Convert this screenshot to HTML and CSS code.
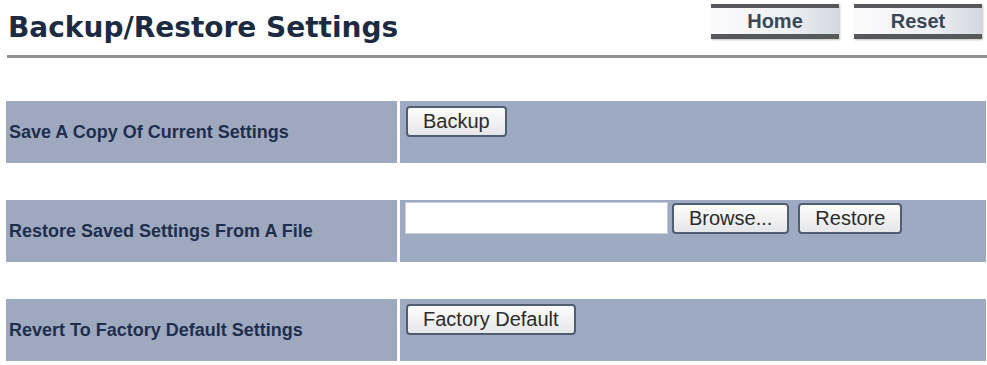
FILE: index.html
```html
<!DOCTYPE html>
<html lang="en">
<head>
    <meta charset="UTF-8">
    <title>Backup/Restore Settings</title>
    <link rel="stylesheet" href="styles.css">
</head>
<body>
    <!-- Kopfzeile -->
    <div class="header">
        <h1 class="title">Backup/Restore Settings</h1>
        <div class="top-buttons">
            <a href="#" class="top-button">Home</a>
            <a href="#" class="top-button">Reset</a>
        </div>
    </div>

    <!-- Einstellungen -->
    <div class="rows">
        <div class="row">
            <div class="label">Save A Copy Of Current Settings</div>
            <div class="field">
                <button class="btn">Backup</button>
            </div>
        </div>
        <div class="row">
            <div class="label">Restore Saved Settings From A File</div>
            <div class="field field-file">
                <input type="text" class="file-input">
                <button class="btn btn-browse">Browse...</button>
                <button class="btn btn-restore">Restore</button>
            </div>
        </div>
        <div class="row">
            <div class="label">Revert To Factory Default Settings</div>
            <div class="field">
                <button class="btn">Factory Default</button>
            </div>
        </div>
    </div>
</body>
</html>
```

FILE: styles.css
```css
body {
    margin: 0;
    padding: 0;
    background-color: #fff;
    font-family: "Liberation Sans", Arial, sans-serif;
    overflow: hidden;
}
.header {
    display: flex;
    justify-content: space-between;
    align-items: flex-start;
    height: 55px;
    margin-left: 7px;
    border-bottom: 3px solid #8f9195;
}
.title {
    margin: 11px 0 0 1px;
    font-family: "DejaVu Sans", Verdana, sans-serif;
    font-size: 28px;
    font-weight: bold;
    color: #1d2b42;
    line-height: normal;
}
.top-buttons {
    display: flex;
    gap: 15px;
    margin-top: 4px;
    margin-right: 5px;
}
.top-button {
    display: block;
    width: 128px;
    height: 26px;
    line-height: 27px;
    border-top: 4px solid #56585c;
    border-bottom: 5px solid #56585c;
    background: linear-gradient(to right, #fbfbfc, #eef0f3 60%, #d3d8e0);
    box-shadow: 1px 1px 2px rgba(0, 0, 0, 0.25);
    text-align: center;
    text-decoration: none;
    font-size: 20px;
    font-weight: bold;
    color: #394859;
}
.rows {
    margin-top: 43px;
    margin-left: 6px;
    width: 980px;
}
.row {
    display: flex;
    height: 62px;
    margin-bottom: 37px;
}
.row:last-child {
    margin-bottom: 0;
}
.label {
    width: 388px;
    padding-left: 3px;
    display: flex;
    align-items: center;
    background-color: #9ea9c0;
    font-size: 18px;
    font-weight: bold;
    color: #1f2e4d;
}
.field {
    flex: 1;
    margin-left: 3px;
    padding: 5px 0 0 6px;
    background-color: #9eaac2;
    display: flex;
    align-items: flex-start;
}
.field-file {
    padding-top: 2px;
    padding-left: 5px;
}
.btn {
    height: 31px;
    padding: 0 15px;
    border: 2px solid #4f5e72;
    border-radius: 4px;
    background: linear-gradient(#fdfdfd, #e5e6e8);
    font-family: "Liberation Sans", Arial, sans-serif;
    font-size: 20px;
    color: #2b2b2b;
}
.file-input {
    width: 261px;
    height: 30px;
    margin: 0;
    padding: 0;
    border: 1px solid #c9cfda;
    background-color: #fff;
}
.btn-browse {
    margin: 1px 0 0 4px;
}
.btn-restore {
    margin: 1px 0 0 9px;
}
```
